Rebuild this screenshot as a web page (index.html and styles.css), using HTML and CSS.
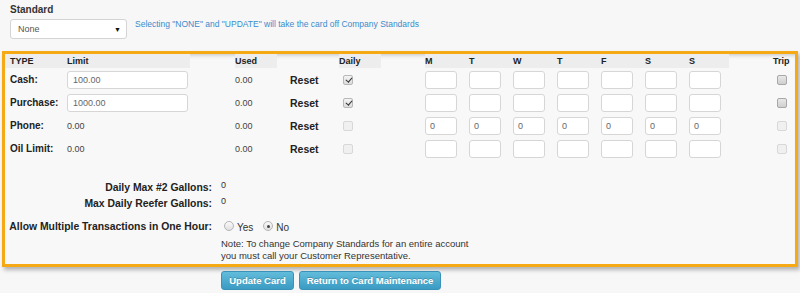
FILE: index.html
```html
<!DOCTYPE html>
<html>
<head>
<meta charset="utf-8">
<link rel="stylesheet" href="styles.css">
</head>
<body>
<div class="top">
  <div class="std-label">Standard</div>
  <div class="std-row">
    <div class="select"><span>None</span><span class="arrow">&#9660;</span></div>
    <div class="hint">Selecting "NONE" and "UPDATE" will take the card off Company Standards</div>
  </div>
</div>

<div class="box">
  <table class="limits">
    <colgroup>
      <col class="c-type"><col class="c-limit"><col class="c-used"><col class="c-reset"><col class="c-daily">
      <col class="c-day"><col class="c-day"><col class="c-day"><col class="c-day"><col class="c-day"><col class="c-day"><col class="c-day">
      <col class="c-gap"><col class="c-trip">
    </colgroup>
    <thead>
      <tr>
        <th class="th-type">TYPE</th><th class="th-limit">Limit</th><th class="th-used">Used</th><th class="th-plain"></th><th class="th-daily">Daily</th>
        <th class="th-day">M</th><th class="th-day">T</th><th class="th-day">W</th><th class="th-day">T</th><th class="th-day">F</th><th class="th-day">S</th><th class="th-day th-last">S</th>
        <th class="th-plain"></th><th class="th-trip">Trip</th>
      </tr>
    </thead>
    <tbody>
      <tr>
        <td class="lbl">Cash:</td>
        <td><span class="input wide">100.00</span></td>
        <td class="val">0.00</td>
        <td class="reset">Reset</td>
        <td><span class="cb checked"></span></td>
        <td><span class="input day"></span></td><td><span class="input day"></span></td><td><span class="input day"></span></td><td><span class="input day"></span></td><td><span class="input day"></span></td><td><span class="input day"></span></td><td><span class="input day"></span></td>
        <td></td><td><span class="cb trip"></span></td>
      </tr>
      <tr>
        <td class="lbl">Purchase:</td>
        <td><span class="input wide">1000.00</span></td>
        <td class="val">0.00</td>
        <td class="reset">Reset</td>
        <td><span class="cb checked"></span></td>
        <td><span class="input day"></span></td><td><span class="input day"></span></td><td><span class="input day"></span></td><td><span class="input day"></span></td><td><span class="input day"></span></td><td><span class="input day"></span></td><td><span class="input day"></span></td>
        <td></td><td><span class="cb trip"></span></td>
      </tr>
      <tr>
        <td class="lbl">Phone:</td>
        <td class="val">0.00</td>
        <td class="val">0.00</td>
        <td class="reset">Reset</td>
        <td><span class="cb disabled"></span></td>
        <td><span class="input day">0</span></td><td><span class="input day">0</span></td><td><span class="input day">0</span></td><td><span class="input day">0</span></td><td><span class="input day">0</span></td><td><span class="input day">0</span></td><td><span class="input day">0</span></td>
        <td></td><td><span class="cb disabled"></span></td>
      </tr>
      <tr>
        <td class="lbl">Oil Limit:</td>
        <td class="val">0.00</td>
        <td class="val">0.00</td>
        <td class="reset">Reset</td>
        <td><span class="cb disabled"></span></td>
        <td><span class="input day"></span></td><td><span class="input day"></span></td><td><span class="input day"></span></td><td><span class="input day"></span></td><td><span class="input day"></span></td><td><span class="input day"></span></td><td><span class="input day"></span></td>
        <td></td><td><span class="cb disabled"></span></td>
      </tr>
    </tbody>
  </table>

  <div class="extra">
    <div class="erow r16"><div class="elabel">Daily Max #2 Gallons:</div><div class="evalue">0</div></div>
    <div class="erow r16"><div class="elabel">Max Daily Reefer Gallons:</div><div class="evalue">0</div></div>
    <div class="erow r24">
      <div class="elabel">Allow Multiple Transactions in One Hour:</div>
      <div class="evalue radios">
        <span class="radio"></span><span class="rtext">Yes</span>
        <span class="radio on"></span><span class="rtext">No</span>
      </div>
    </div>
    <div class="note">Note: To change Company Standards for an entire account<br>you must call your Customer Representative.</div>
  </div>
</div>

<div class="buttons">
  <span class="btn btn-update">Update Card</span>
  <span class="btn btn-return">Return to Card Maintenance</span>
</div>
</body>
</html>
```

FILE: styles.css
```css
html, body {
  margin: 0;
  padding: 0;
  background: #f7f7f7;
  font-family: "Liberation Sans", Arial, sans-serif;
  color: #333;
}

.top {
  padding: 4px 0 0 10px;
  height: 47px;
}

.std-label {
  font-size: 10px;
  font-weight: bold;
  line-height: 12px;
  height: 15px;
  color: #333;
}

.std-row {
  display: flex;
  align-items: flex-start;
}

.select {
  box-sizing: border-box;
  width: 117px;
  height: 20px;
  background: #fff;
  border: 1px solid #d4d4d4;
  border-radius: 3px;
  display: flex;
  align-items: center;
  justify-content: space-between;
  padding: 0 5px 0 7px;
  font-size: 9px;
  color: #555;
}

.select .arrow {
  font-size: 7px;
  color: #111;
}

.hint {
  margin-left: 8px;
  margin-top: 0;
  font-size: 8.5px;
  line-height: 10px;
  color: #3a8ccc;
}

.box {
  margin-left: 2px;
  width: 790px;
  border: 3px solid #f5aa15;
  box-shadow: 2px 3px 4px rgba(0, 0, 0, 0.28), inset 0 4px 4px -3px rgba(0, 0, 0, 0.22);
  background: #f8f8f8;
}

.limits {
  border-collapse: collapse;
  table-layout: fixed;
  width: 790px;
}

.c-type { width: 62px; }
.c-limit { width: 168px; }
.c-used { width: 55px; }
.c-reset { width: 49px; }
.c-daily { width: 86px; }
.c-day { width: 44px; }
.c-gap { width: 40px; }
.c-trip { width: 22px; }

.limits th, .limits td {
  padding: 0;
  text-align: left;
  vertical-align: middle;
  white-space: nowrap;
}

.limits thead tr { height: 14px; }
.limits tbody tr { height: 23px; }

.limits th {
  font-size: 9px;
  font-weight: bold;
  color: #222;
  line-height: 14px;
}

.th-type { padding-left: 5px !important; background: #ededed; }
.th-limit { background: linear-gradient(to right, #ededed 123px, transparent 123px); }
.th-used { background: linear-gradient(to right, #ededed 42px, transparent 42px); }
.th-daily { background: linear-gradient(to right, #ededed 42px, transparent 42px); }
.th-day { background: #ededed; }
.th-last { background: linear-gradient(to right, #ededed 40px, transparent 40px); }
.th-trip { padding-left: 0; }

.lbl {
  padding-left: 5px !important;
  font-size: 10px;
  font-weight: bold;
  color: #222;
}

.val {
  font-size: 9px;
  color: #444;
}

.reset {
  font-size: 10.5px;
  font-weight: bold;
  color: #222;
}

.input {
  box-sizing: border-box;
  display: flex;
  align-items: center;
  height: 18px;
  background: #fff;
  border: 1px solid #d6d6d6;
  border-radius: 3px;
  font-size: 9px;
  color: #666;
}

.input.wide {
  width: 121px;
  padding-left: 5px;
}

.input.day {
  width: 32px;
  padding-left: 4px;
}

.cb {
  display: block;
  box-sizing: border-box;
  width: 10px;
  height: 10px;
  margin-left: 4px;
  border: 1px solid #b8b8b8;
  border-radius: 2px;
  background: linear-gradient(#f4f4f4, #dcdcdc);
  position: relative;
}

.cb.checked::after {
  content: "";
  position: absolute;
  left: 2.5px;
  top: 0.5px;
  width: 2.5px;
  height: 5px;
  border: solid #333;
  border-width: 0 1.5px 1.5px 0;
  transform: rotate(40deg);
}

.cb.trip {
  border-color: #a8a8a8;
  background: linear-gradient(#e8e8e8, #cfcfcf);
}

.cb.disabled {
  border-color: #d8d8d8;
  background: #f0f0f0;
}

.extra {
  margin-top: 19px;
  padding-bottom: 2px;
}

.erow {
  display: grid;
  grid-template-columns: 207px auto;
  column-gap: 9px;
  align-items: center;
}

.r16 { height: 16px; }
.r24 { height: 24px; margin-top: 3px; }

.elabel {
  text-align: right;
  font-size: 10.4px;
  font-weight: bold;
  color: #222;
  white-space: nowrap;
}

.evalue {
  font-size: 9px;
  color: #333;
  margin-top: -4px;
}

.radios {
  display: flex;
  align-items: center;
  margin-top: 0;
  margin-left: 3px;
}

.radio {
  box-sizing: border-box;
  width: 10px;
  height: 10px;
  border-radius: 50%;
  border: 1px solid #b5b5b5;
  background: linear-gradient(#fafafa, #e0e0e0);
  position: relative;
}

.radio.on::after {
  content: "";
  position: absolute;
  left: 2.5px;
  top: 2.5px;
  width: 3px;
  height: 3px;
  border-radius: 50%;
  background: #444;
}

.rtext {
  font-size: 10px;
  color: #333;
  margin-left: 3px;
  margin-right: 10px;
  margin-top: 3px;
}

.note {
  margin-left: 216px;
  font-size: 9.5px;
  line-height: 12px;
  color: #333;
}

.buttons {
  margin: 4px 0 0 221px;
  display: flex;
  gap: 5px;
}

.btn {
  box-sizing: border-box;
  height: 19px;
  display: flex;
  align-items: center;
  justify-content: center;
  background: linear-gradient(#62bcdb, #3b9bc3);
  border: 1px solid #3a92b8;
  border-radius: 3px;
  color: #fff;
  font-size: 9.5px;
  font-weight: bold;
  text-shadow: 0 -1px 0 rgba(0, 0, 0, 0.2);
}

.btn-update { width: 73px; }
.btn-return { width: 142px; }
```
